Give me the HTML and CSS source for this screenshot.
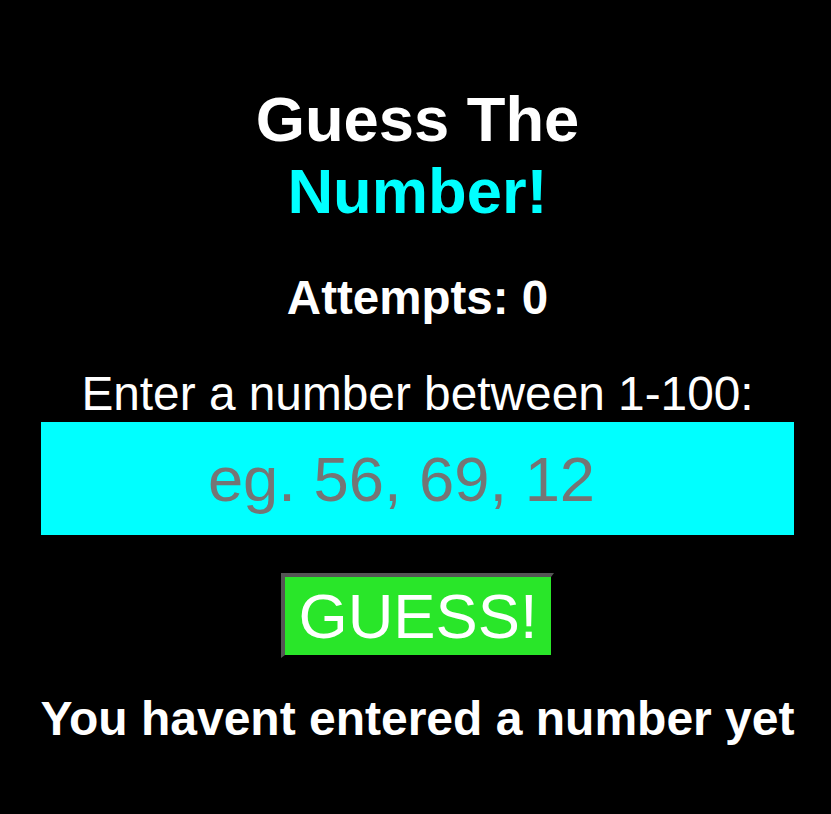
FILE: index.html
```html
<!DOCTYPE html>
<html>
<head>
<meta charset="utf-8">
<title>Guess The Number</title>
<link rel="stylesheet" href="styles.css">
</head>
<body>
<main class="game">
  <h1 class="title">Guess The<br><span class="accent">Number!</span></h1>
  <h2 class="attempts">Attempts: 0</h2>
  <label class="prompt" for="guess">Enter a number between 1-100:</label>
  <input class="guess-input" id="guess" type="text" placeholder="eg. 56, 69, 12">
  <button class="guess-btn" type="button">GUESS!</button>
  <h2 class="message">You havent entered a number yet</h2>
</main>
</body>
</html>
```
FILE: styles.css
```css
html, body {
  margin: 0;
  padding: 0;
  background: #000;
}
body {
  font-family: "Liberation Sans", Arial, sans-serif;
  color: #fff;
  height: 814px;
  overflow: hidden;
}
.game {
  display: flex;
  flex-direction: column;
  align-items: center;
  padding: 83px 0 0 4px;
  text-align: center;
}
.title {
  margin: 0;
  font-size: 63.3px;
  font-weight: bold;
  line-height: normal;
}
.accent {
  color: #00ffff;
}
.attempts {
  margin: 43px 0 0;
  font-size: 47.5px;
  font-weight: bold;
  line-height: normal;
}
.prompt {
  display: block;
  margin-top: 41px;
  font-size: 47.8px;
  line-height: normal;
}
.guess-input {
  box-sizing: border-box;
  margin-top: 1px;
  width: 753px;
  height: 113px;
  border: none;
  outline: none;
  background: #00ffff;
  font-family: "Liberation Sans", Arial, sans-serif;
  font-size: 63.3px;
  text-align: center;
  color: #000;
  padding: 0 32px 0 0;
}
.guess-input::placeholder {
  color: #757575;
}
.guess-btn {
  margin-top: 38px;
  background: #29e629;
  color: #fff;
  font-family: "Liberation Sans", Arial, sans-serif;
  font-size: 63.3px;
  line-height: normal;
  padding: 3px 13px;
  border-style: solid;
  border-width: 4px 3px 3px 4px;
  border-color: #555 #000 #000 #555;
}
.message {
  margin: 33px 0 0;
  font-size: 48px;
  font-weight: bold;
  line-height: normal;
}
```
